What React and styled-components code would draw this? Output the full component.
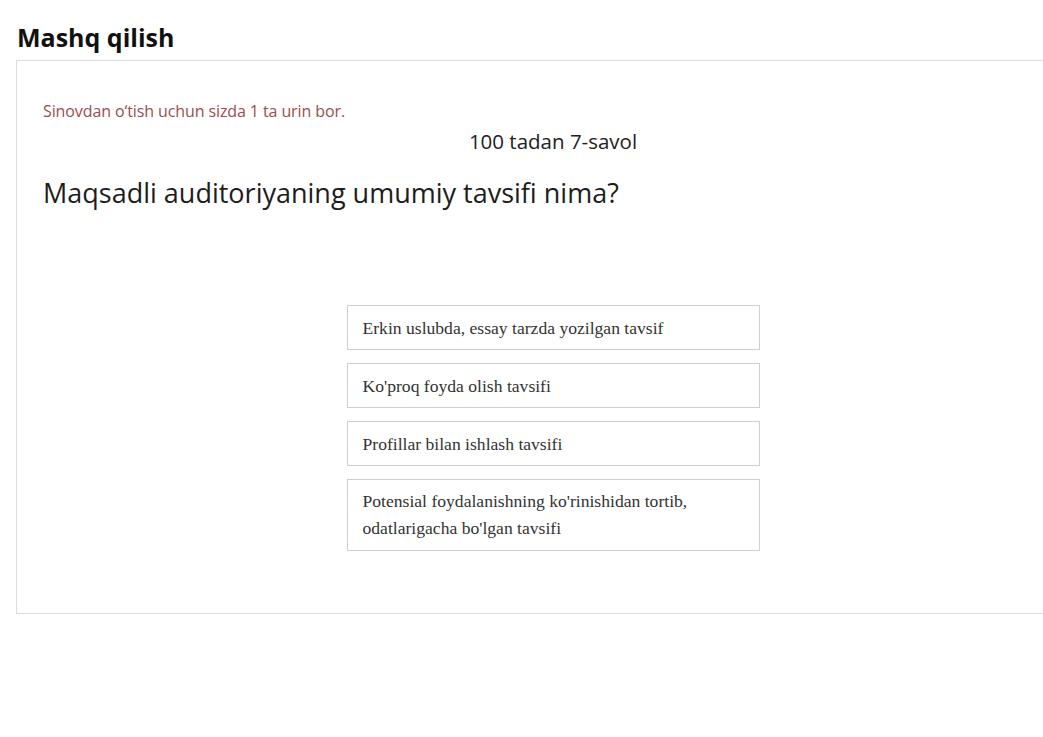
import React from 'react';
import styled, { createGlobalStyle } from 'styled-components';

const GlobalStyle = createGlobalStyle`
  html, body {
    margin: 0;
    padding: 0;
    background: #fff;
    overflow: hidden;
  }
  body {
    font-family: "Open Sans", "Liberation Sans", sans-serif;
    color: #1a1a1a;
  }
`;

const Page = styled.div`
  padding: 22px 0 0 16px;
`;

const Title = styled.h2`
  margin: 0 0 8px 1px;
  font-size: 25px;
  line-height: 30px;
  font-weight: 700;
  color: #111;
`;

const Card = styled.section`
  width: 1074px;
  box-sizing: border-box;
  border: 1px solid #dcdcdc;
  padding: 40px 26px 62px;
`;

const Attempts = styled.p`
  margin: 0;
  font-size: 16px;
  line-height: 20px;
  color: #9b4d4f;
  letter-spacing: -0.1px;
`;

const Counter = styled.div`
  margin-top: 7px;
  text-align: center;
  font-size: 20.5px;
  line-height: 26px;
  color: #222;
`;

const Question = styled.h3`
  margin: 21px 0 0;
  font-size: 27px;
  line-height: 36px;
  font-weight: 400;
  color: #1d1d1d;
`;

const Options = styled.ul`
  list-style: none;
  margin: 94px auto 0;
  padding: 0;
  width: 413px;
  display: flex;
  flex-direction: column;
  gap: 13px;
`;

const Option = styled.li`
  box-sizing: border-box;
  border: 1px solid #cfcfcf;
  padding: 7.5px 15px;
  font-family: "Liberation Serif", "Times New Roman", serif;
  font-size: 17.6px;
  line-height: 28px;
  color: #333;
  cursor: pointer;

  &:last-child {
    line-height: 27.5px;
  }
`;

const answers = [
  'Erkin uslubda, essay tarzda yozilgan tavsif',
  "Ko'proq foyda olish tavsifi",
  'Profillar bilan ishlash tavsifi',
  "Potensial foydalanishning ko'rinishidan tortib, odatlarigacha bo'lgan tavsifi",
];

const App = () => {
  return (
    <Page>
      <GlobalStyle />
      <Title>Mashq qilish</Title>
      <Card>
        <Attempts>Sinovdan o‘tish uchun sizda 1 ta urin bor.</Attempts>
        <Counter>100 tadan 7-savol</Counter>
        <Question>Maqsadli auditoriyaning umumiy tavsifi nima?</Question>
        <Options>
          {answers.map((text) => (
            <Option key={text}>{text}</Option>
          ))}
        </Options>
      </Card>
    </Page>
  );
};

export default App;
